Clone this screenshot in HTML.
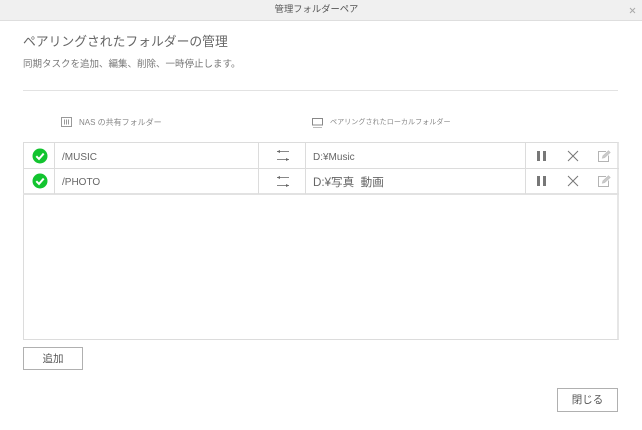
<!DOCTYPE html>
<html lang="ja">
<head>
<meta charset="utf-8">
<style>
html,body{margin:0;padding:0;background:#fff}
body{width:642px;height:430px;position:relative;overflow:hidden;font-family:"Liberation Sans","Noto Sans CJK JP",sans-serif;color:#555}
.a{position:absolute;white-space:nowrap}
.l{position:absolute;background:#dcdcdc}
svg{position:absolute;overflow:visible}
.btn{position:absolute;box-sizing:border-box;background:#fff;border:1px solid #b0b0b0;text-align:center;font-size:10.5px;color:#555}
</style>
</head>
<body>
<div class="a" style="left:0;top:0;width:642px;height:20px;background:#f0f0f0;border-bottom:1px solid #dedede"></div>
<div class="a" style="left:0;top:2px;width:633px;text-align:center;font-size:9.3px;line-height:14px;color:#555">管理フォルダーペア</div>
<svg style="left:630px;top:8px" width="5" height="5"><path d="M0 0L5 5M5 0L0 5" stroke="#aaa" stroke-width="1" fill="none"/></svg>

<div class="a" style="left:23px;top:32px;font-size:12.8px;line-height:19px;color:#666">ペアリングされたフォルダーの管理</div>
<div class="a" style="left:23px;top:58px;font-size:9.5px;line-height:14px;color:#777">同期タスクを追加、編集、削除、一時停止します。</div>
<div class="l" style="left:23px;top:90px;width:595px;height:1px;background:#e2e2e2"></div>

<svg style="left:61px;top:117px" width="12" height="11" fill="none" stroke="#999" stroke-width="1"><rect x=".5" y=".5" width="10" height="9"/><path d="M3.5 2.5v5M5.5 2.5v5M7.5 2.5v5"/></svg>
<div class="a" style="left:79px;top:116px;font-size:8px;line-height:13px;color:#888">NAS の共有フォルダー</div>
<svg style="left:312px;top:118px" width="12" height="10" fill="none" stroke="#888" stroke-width="1"><rect x=".5" y=".5" width="10" height="6.5"/><path d="M1 9.5h9" stroke="#bbb"/></svg>
<div class="a" style="left:330px;top:116px;font-size:7.1px;line-height:13px;color:#888">ペアリングされたローカルフォルダー</div>

<div class="a" style="left:23px;top:142px;width:596px;height:198px;box-sizing:border-box;border:1px solid #dcdcdc;border-right-width:2px;border-right-color:#e6e6e6"></div>
<div class="l" style="left:23px;top:168px;width:596px;height:1px"></div>
<div class="l" style="left:23px;top:193px;width:596px;height:2px;background:#e2e2e2"></div>
<div class="l" style="left:54px;top:142px;width:1px;height:52px"></div>
<div class="l" style="left:258px;top:142px;width:1px;height:52px"></div>
<div class="l" style="left:305px;top:142px;width:1px;height:52px"></div>
<div class="l" style="left:525px;top:142px;width:1px;height:52px"></div>

<svg style="left:32px;top:148px" width="16" height="16"><circle cx="8" cy="8" r="7.5" fill="#12c42f"/><path d="M4.3 8.2L7 10.9L11.7 5.6" stroke="#fff" stroke-width="2" fill="none"/></svg>
<svg style="left:32px;top:173px" width="16" height="16"><circle cx="8" cy="8" r="7.5" fill="#12c42f"/><path d="M4.3 8.2L7 10.9L11.7 5.6" stroke="#fff" stroke-width="2" fill="none"/></svg>

<div class="a" style="left:62px;top:151px;font-size:10px;line-height:14px;color:#666">/MUSIC</div>
<div class="a" style="left:62px;top:176px;font-size:10px;line-height:14px;color:#666">/PHOTO</div>

<svg style="left:276px;top:150px" width="14" height="13" fill="none" stroke="#888" stroke-width="1"><path d="M13 1.5H1M1 9.5H13"/><path d="M4 0V3L1 1.5ZM10 8V11L13 9.5Z" fill="#666" stroke="none"/></svg>
<svg style="left:276px;top:176px" width="14" height="13" fill="none" stroke="#888" stroke-width="1"><path d="M13 1.5H1M1 9.5H13"/><path d="M4 0V3L1 1.5ZM10 8V11L13 9.5Z" fill="#666" stroke="none"/></svg>

<div class="a" style="left:313px;top:151px;font-size:10px;line-height:14px;color:#666">D:¥Music</div>
<div class="a" style="left:313px;top:176px;font-size:11.6px;line-height:14px;color:#666">D:¥写真 &nbsp;動画</div>

<svg style="left:537px;top:151px" width="9" height="10"><path d="M0 0h3v10h-3zM6 0h3v10h-3z" fill="#777"/></svg>
<svg style="left:537px;top:176px" width="9" height="10"><path d="M0 0h3v10h-3zM6 0h3v10h-3z" fill="#777"/></svg>
<svg style="left:567px;top:150px" width="12" height="12" fill="none" stroke="#777" stroke-width="1"><path d="M1 1L11 11M11 1L1 11"/></svg>
<svg style="left:567px;top:175px" width="12" height="12" fill="none" stroke="#777" stroke-width="1"><path d="M1 1L11 11M11 1L1 11"/></svg>
<svg style="left:598px;top:150px" width="13" height="13" fill="none" stroke="#b4b4b4" stroke-width="1"><path d="M8 1.5H.5V11.5H10.5V5.5"/><path d="M4.5 8L5 6L10.5 1L12 2.5L6.5 7.5Z" fill="#ccc" stroke="#c4c4c4"/></svg>
<svg style="left:598px;top:175px" width="13" height="13" fill="none" stroke="#b4b4b4" stroke-width="1"><path d="M8 1.5H.5V11.5H10.5V5.5"/><path d="M4.5 8L5 6L10.5 1L12 2.5L6.5 7.5Z" fill="#ccc" stroke="#c4c4c4"/></svg>

<div class="btn" style="left:23px;top:347px;width:60px;height:23px;line-height:22px">追加</div>
<div class="btn" style="left:557px;top:388px;width:61px;height:24px;line-height:22px">閉じる</div>
</body>
</html>
